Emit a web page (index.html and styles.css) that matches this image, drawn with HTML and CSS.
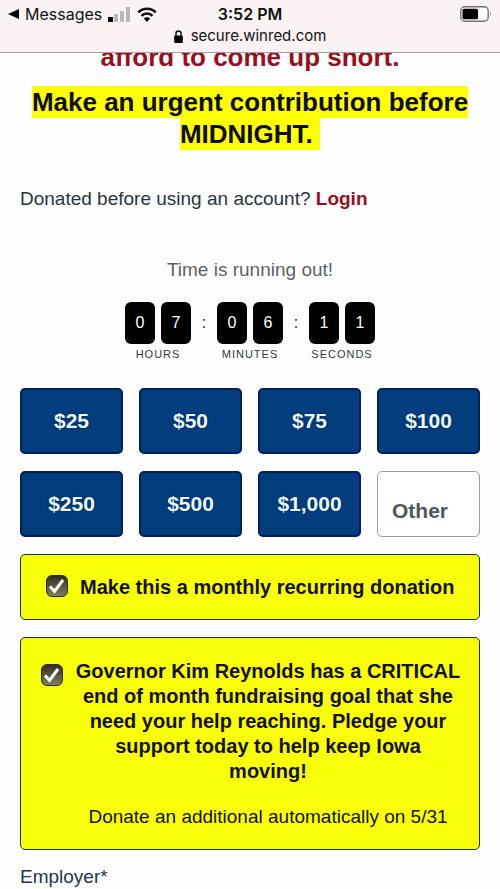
FILE: index.html
```html
<!DOCTYPE html>
<html lang="en">
<head>
<meta charset="utf-8">
<meta name="viewport" content="width=device-width, initial-scale=1">
<title>Donate</title>
<link rel="stylesheet" href="styles.css">
</head>
<body>
<header class="browser-bar">
  <div class="status">
    <div class="status-left">
      <svg class="back" viewBox="0 0 11 10" aria-hidden="true"><path d="M0 5 11 0v10z"/></svg>
      <span>Messages</span>
      <svg class="signal" viewBox="0 0 23 15" aria-hidden="true"><path d="M0 10h5v5H0z"/><path class="faint" d="M6 7h4v8H6zM12 4h4v11h-4zM18 0h4v15h-4z"/></svg>
      <svg class="wifi" viewBox="0 0 20 15" aria-hidden="true"><path class="arc" d="M1.2 5.3a12.5 12.5 0 0 1 17.6 0M4.5 8.8a7.8 7.8 0 0 1 11 0"/><path d="M6.8 11.5a4.6 4.6 0 0 1 6.4 0L10 15z"/></svg>
    </div>
    <span class="time">3:52 PM</span>
    <svg class="battery" viewBox="0 0 32 16" aria-hidden="true"><rect class="case" x=".8" y=".8" width="27.4" height="14.4" rx="4"/><rect x="2.5" y="2.8" width="15.5" height="10.4" rx="1.5"/><path class="tip" d="M30 5.5q1.8 2.5 0 5z"/></svg>
  </div>
  <div class="address">
    <svg class="lock" viewBox="0 0 8 12" aria-hidden="true"><rect y="5" width="8" height="7" rx="1"/><path class="shackle" d="M1.7 6V3.2a2.3 2.3 0 0 1 4.6 0V6"/></svg>
    <span>secure.winred.com</span>
  </div>
</header>
<main class="page">
  <div class="appeal">
    <p class="warning">afford to come up short.</p>
    <p><mark>Make an urgent contribution before MIDNIGHT.&nbsp;</mark></p>
  </div>
  <p class="login">Donated before using an account? <a href="#login">Login</a></p>
  <section class="countdown">
    <p class="countdown-title">Time is running out!</p>
    <div class="clock">
      <div class="unit"><div class="digits"><span>0</span><span>7</span></div><small>HOURS</small></div>
      <span class="colon">:</span>
      <div class="unit"><div class="digits"><span>0</span><span>6</span></div><small>MINUTES</small></div>
      <span class="colon">:</span>
      <div class="unit"><div class="digits"><span>1</span><span>1</span></div><small>SECONDS</small></div>
    </div>
  </section>
  <form class="donation">
    <div class="amounts">
      <button type="button">$25</button>
      <button type="button">$50</button>
      <button type="button">$75</button>
      <button type="button">$100</button>
      <button type="button">$250</button>
      <button type="button">$500</button>
      <button type="button">$1,000</button>
      <input type="text" placeholder="Other" aria-label="Other">
    </div>
    <label class="pledge recurring" for="monthly">
      <span class="tick"><input type="checkbox" id="monthly" checked><svg viewBox="0 0 22 22" aria-hidden="true"><path d="m4 11.5 4.5 5L17 5"/></svg></span>
      <strong>Make this a monthly recurring donation</strong>
    </label>
    <label class="pledge extra" for="additional">
      <span class="tick"><input type="checkbox" id="additional" checked><svg viewBox="0 0 22 22" aria-hidden="true"><path d="m4 11.5 4.5 5L17 5"/></svg></span>
      <span class="pledge-text">
        <strong>Governor Kim Reynolds has a CRITICAL end of month fundraising goal that she need your help reaching. Pledge your support today to help keep Iowa moving!</strong>
        <span class="note">Donate an additional automatically on 5/31</span>
      </span>
    </label>
    <p class="employer">Employer*</p>
  </form>
</main>
</body>
</html>
```
FILE: styles.css
```css
* { box-sizing: border-box; }
body {
  margin: 0;
  background: #fefefe;
  color: #283444;
  font-family: "Liberation Sans", Arial, sans-serif;
  font-size: 19px;
  line-height: 24px;
}
p { margin: 0; }

.browser-bar {
  padding: 4px 8px 6px;
  background: #faf2f3;
  border-bottom: 1px solid #a5a0a1;
  color: #111;
  font-family: Inter, sans-serif;
  font-size: 16px;
  line-height: 20px;
}
.status {
  display: grid;
  grid-template-columns: 1fr auto 1fr;
  align-items: center;
}
.status-left { display: flex; align-items: center; gap: 6px; }
.back { width: 11px; height: 10px; }
.signal { width: 23px; height: 15px; }
.faint { fill: #bbb5b6; }
.wifi { width: 20px; height: 15px; }
.arc { fill: none; stroke: #111; stroke-width: 2.6; }
.time { font-weight: 600; }
.battery { width: 32px; height: 16px; justify-self: end; }
.case { fill: #fff; stroke: #77716f; stroke-width: 1.4; }
.tip { fill: #77716f; }
.address {
  display: flex;
  justify-content: center;
  align-items: center;
  gap: 8px;
  margin-top: 2px;
  font-size: 15px;
}
.lock { width: 9px; height: 13px; }
.shackle { fill: none; stroke: #111; stroke-width: 1.4; }

/* The heading is scrolled partly under the browser bar. */
.page { padding: 0 20px; overflow: hidden; }
.appeal {
  margin: -12px -10px 0;
  color: #100c08;
  font-size: 26px;
  font-weight: 700;
  line-height: 32px;
  text-align: center;
}
.warning { margin-bottom: 13px; color: #990f1e; }
mark { padding: 1px 0; background: #ffff08; color: inherit; }
.login { margin-top: 37px; }
.login a { color: #990f1e; font-weight: 700; text-decoration: none; }

.countdown { margin-top: 47px; text-align: center; }
.countdown-title { color: #5d6164; }
.clock { display: flex; justify-content: center; margin-top: 20px; }
.digits { display: flex; gap: 6px; }
.digits span {
  width: 30px;
  height: 42px;
  border-radius: 6px;
  background: #000;
  color: #fff;
  font-size: 16px;
  line-height: 42px;
}
.colon { width: 26px; color: #222; font-size: 16px; line-height: 42px; }
.unit small {
  display: block;
  color: #33383d;
  font-size: 11px;
  letter-spacing: 1px;
  line-height: 20px;
}

.amounts {
  display: grid;
  grid-template-columns: repeat(4, 1fr);
  gap: 17px 16px;
  margin-top: 24px;
}
.amounts button, .amounts input {
  width: 100%;
  min-width: 0;
  height: 66px;
  border-radius: 5px;
  font: 700 21px/24px "Liberation Sans", Arial, sans-serif;
}
.amounts button {
  padding: 0;
  border: 2px solid #00205a;
  background: #043d7e;
  color: #e9fbff;
  text-shadow: 0 0 2px #00184c;
}
.amounts input {
  padding: 14px 14px 0;
  border: 1px solid #9a9ea6;
  background: #fff;
}
.amounts input::placeholder { color: #50575a; opacity: 1; }

.pledge {
  display: flex;
  margin-top: 17px;
  border: 1px solid #12380f;
  border-radius: 5px;
  background: #f8ff08;
  color: #160f08;
  font-size: 20px;
  line-height: 25px;
}
.recurring { padding: 20px 16px 19px 25px; gap: 12px; }
.extra { padding: 21px 18px 20px 20px; gap: 12px; }
.tick { position: relative; flex: none; width: 22px; height: 22px; }
.extra .tick { margin-top: 5px; }
.tick input {
  display: block;
  appearance: none;
  width: 22px;
  height: 22px;
  margin: 0;
  border: 1px solid #29270c;
  border-radius: 6px;
  background: linear-gradient(#2f2d20, #817f5d);
}
.tick svg {
  position: absolute;
  inset: 0;
  fill: none;
  stroke: #fff;
  stroke-width: 3;
  pointer-events: none;
}
.pledge-text { flex: 1; text-align: center; }
.note { display: block; margin-top: 20px; font-size: 19px; }
.employer { margin-top: 15px; }
```
